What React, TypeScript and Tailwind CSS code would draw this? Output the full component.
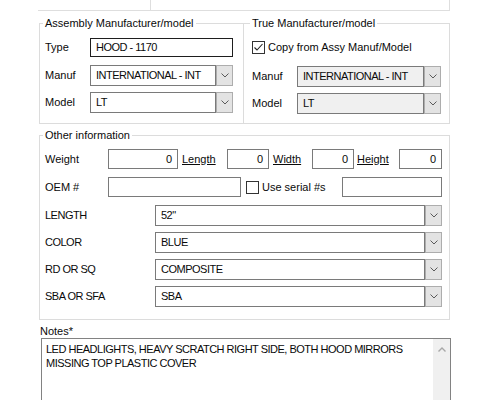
import React from "react";

const Chevron = () => (
  <svg width="8" height="5" viewBox="0 0 8 5">
    <polyline points="0.5,0.5 4,4 7.5,0.5" fill="none" stroke="#5a5a5a" strokeWidth="1" />
  </svg>
);

const Check = ({ checked }: { checked?: boolean }) => (
  <div className="w-[13px] h-[13px] border border-[#333] bg-white flex items-center justify-center shrink-0">
    {checked && (
      <svg width="11" height="11" viewBox="0 0 11 11">
        <polyline points="1.5,5.5 4,8 9.5,2" fill="none" stroke="#222" strokeWidth="1.1" />
      </svg>
    )}
  </div>
);

const Combo = ({
  value,
  w,
  disabled,
  h = "h-[21px]",
}: {
  value: string;
  w: string;
  disabled?: boolean;
  h?: string;
}) => (
  <div className={`flex ${w} ${h} shrink-0`}>
    <div
      className={`flex-1 border border-[#7a7a7a] ${disabled ? "bg-[#f0f0f0]" : "bg-white"} flex items-center pl-[5px] tracking-[-0.5px] whitespace-nowrap overflow-hidden`}
    >
      {value}
    </div>
    <div className="w-[17px] bg-[#e3e3e3] border border-[#adadad] flex items-center justify-center">
      <Chevron />
    </div>
  </div>
);

const Box = ({ w, value, right }: { w: string; value?: string; right?: boolean }) => (
  <div
    className={`${w} h-[20px] shrink-0 border border-[#7a7a7a] bg-white flex items-center ${right ? "justify-end pr-[5px]" : "pl-[5px]"}`}
  >
    {value}
  </div>
);

export default function App() {
  return (
    <div className="w-[500px] h-[400px] bg-white overflow-hidden font-['Liberation_Sans',Arial,sans-serif] text-[11px] leading-[13px] text-[#0a0a0a]">
      {/* top strip */}
      <div className="ml-[38px] w-[412px] h-[11px] border-b border-r border-[#dedede] flex">
        <div className="w-[113px] border-r border-[#dedede]" />
      </div>

      {/* upper groups */}
      <div className="ml-[39px] mt-[5px] flex w-[411px]">
        <fieldset className="w-[205px] h-[108px] border border-[#dcdcdc]">
          <legend className="ml-[3px] px-[2px] leading-[14px]">Assembly Manufacturer/model</legend>
          <div className="pl-[5px] pt-[8px] flex flex-col">
            <div className="flex items-center h-[19px]">
              <div className="w-[45px]">Type</div>
              <div className="w-[143px] h-[19px] border border-[#1e1e1e] bg-white flex items-center pl-[5px] tracking-[-0.5px]">
                HOOD - 1170
              </div>
            </div>
            <div className="flex items-center mt-[8px]">
              <div className="w-[45px]">Manuf</div>
              <Combo value="INTERNATIONAL - INT" w="w-[143px]" />
            </div>
            <div className="flex items-center mt-[6px]">
              <div className="w-[45px]">Model</div>
              <Combo value="LT" w="w-[143px]" />
            </div>
          </div>
        </fieldset>
        <fieldset className="w-[206px] h-[108px] border border-l-0 border-[#dcdcdc]">
          <legend className="ml-[6px] px-[2px] leading-[14px]">True Manufacturer/model</legend>
          <div className="pl-[8px] pt-[11px] flex flex-col">
            <div className="flex items-center h-[13px]">
              <Check checked />
              <div className="ml-[3px]">Copy from Assy Manuf/Model</div>
            </div>
            <div className="flex items-center mt-[12px]">
              <div className="w-[45px]">Manuf</div>
              <Combo value="INTERNATIONAL - INT" w="w-[144px]" disabled />
            </div>
            <div className="flex items-center mt-[6px]">
              <div className="w-[45px]">Model</div>
              <Combo value="LT" w="w-[144px]" disabled />
            </div>
          </div>
        </fieldset>
      </div>

      {/* other information */}
      <fieldset className="ml-[39px] mt-[4px] w-[411px] h-[192px] border border-[#dcdcdc]">
        <legend className="ml-[3px] px-[2px] leading-[14px]">Other information</legend>
        <div className="pl-[5px] pt-[7px] flex flex-col">
          <div className="flex items-center">
            <div className="w-[63px]">Weight</div>
            <Box w="w-[70px]" value="0" right />
            <div className="ml-[4px] w-[45px] underline">Length</div>
            <Box w="w-[42px]" value="0" right />
            <div className="ml-[4px] w-[39px] underline">Width</div>
            <Box w="w-[42px]" value="0" right />
            <div className="ml-[3px] w-[42px] underline">Height</div>
            <Box w="w-[43px]" value="0" right />
          </div>
          <div className="flex items-center mt-[8px]">
            <div className="w-[63px]">OEM #</div>
            <Box w="w-[133px]" />
            <div className="ml-[5px]">
              <Check />
            </div>
            <div className="ml-[3px] w-[80px]">Use serial #s</div>
            <Box w="w-[100px]" />
          </div>
          <div className="flex items-center mt-[8px]">
            <div className="w-[110px] tracking-[-0.5px]">LENGTH</div>
            <Combo value={'52"'} w="w-[287px]" />
          </div>
          <div className="flex items-center mt-[6px]">
            <div className="w-[110px] tracking-[-0.5px]">COLOR</div>
            <Combo value="BLUE" w="w-[287px]" />
          </div>
          <div className="flex items-center mt-[6px]">
            <div className="w-[110px] tracking-[-0.5px]">RD OR SQ</div>
            <Combo value="COMPOSITE" w="w-[287px]" />
          </div>
          <div className="flex items-center mt-[6px]">
            <div className="w-[110px] tracking-[-0.5px]">SBA OR SFA</div>
            <Combo value="SBA" w="w-[287px]" />
          </div>
        </div>
      </fieldset>

      {/* notes */}
      <div className="ml-[40px] mt-[5px] leading-[13px]">Notes*</div>
      <div className="ml-[41px] w-[410px] h-[80px] border border-[#828282] flex">
        <div className="flex-1 pl-[4px] pt-[3px] leading-[14px] tracking-[-0.5px]">
          <div>LED HEADLIGHTS, HEAVY SCRATCH RIGHT SIDE, BOTH HOOD MIRRORS</div>
          <div>MISSING TOP PLASTIC COVER</div>
        </div>
        <div className="w-[17px] bg-[#f0f0f0] flex justify-center pt-[8px]">
          <svg width="8" height="5" viewBox="0 0 8 5">
            <polyline points="0.5,4.5 4,1 7.5,4.5" fill="none" stroke="#a8a8a8" strokeWidth="1.4" />
          </svg>
        </div>
      </div>
    </div>
  );
}
